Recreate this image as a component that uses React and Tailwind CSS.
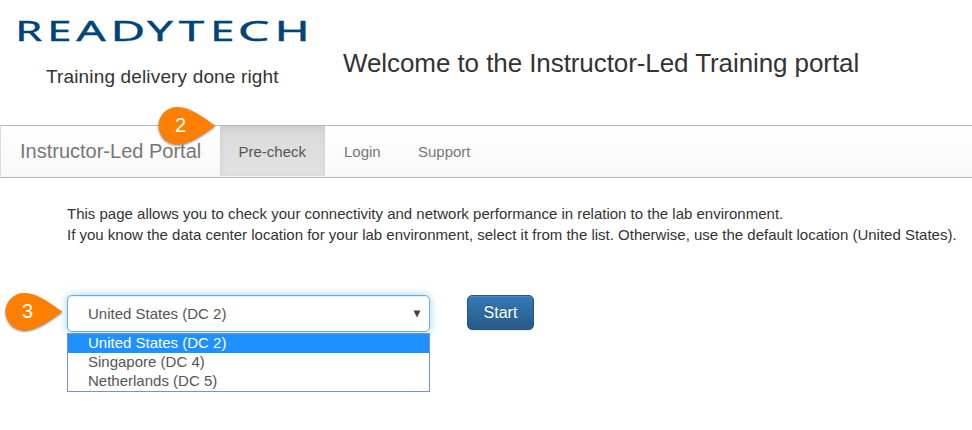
const letters = [
  { char: "R", transform: "translate(15.2 40.8) scale(1.55 1)" },
  { char: "E", transform: "translate(47.2 40.8) scale(1.55 1)" },
  { char: "A", transform: "translate(76.3 40.8) scale(1.65 1)" },
  { char: "D", transform: "translate(110.5 40.8) scale(1.7 1)" },
  { char: "Y", transform: "translate(147 40.8) scale(1.64 1)" },
  { char: "T", transform: "translate(178.8 40.8) scale(1.64 1)" },
  { char: "E", transform: "translate(210.2 40.8) scale(1.55 1)" },
  { char: "C", transform: "translate(237.8 40.8) scale(1.8 1)" },
  { char: "H", transform: "translate(274.5 40.8) scale(1.7 1)" },
];

function Logo() {
  return (
    <svg width="310" height="50" viewBox="0 0 310 50" className="block" role="img" aria-label="READYTECH">
      {letters.map(({ char, transform }, i) => (
        <text key={i} transform={transform} fontSize="28" fontFamily="'Noto Sans', sans-serif" fill="#004478" stroke="#004478" strokeWidth="0.4">
          {char}
        </text>
      ))}
    </svg>
  );
}

function Marker({ label, className }) {
  return (
    <div className={`absolute h-[38px] w-[58px] ${className}`}>
      <svg width="58" height="38" viewBox="0 0 58 38" className="absolute inset-0 overflow-visible drop-shadow-[0_1px_1px_rgba(0,0,0,0.5)]">
        <path d="M57.3 18.7C46 11 33 0 19.2 0A18.7 18.7 0 0 0 19.2 37.4C33 37.4 46 26.4 57.3 18.7Z" fill="#ff8000" />
      </svg>
      <span className="absolute left-[17px] top-[6px] text-[20px] leading-6 text-white">{label}</span>
    </div>
  );
}

export default function App() {
  return (
    <div className="h-[430px] w-[972px] overflow-hidden bg-white font-['Liberation_Sans',Arial,sans-serif] text-[15px] text-[#333]">
      <header className="flex h-[125px]">
        <div className="w-[343px] shrink-0">
          <Logo />
          <p className="pl-[46px] pt-[14px] text-[19px] leading-[26px] tracking-[0.15px] whitespace-nowrap">Training delivery done right</p>
        </div>
        <h1 className="pt-[45px] text-[26px] leading-9 tracking-[-0.08px] whitespace-nowrap">Welcome to the Instructor-Led Training portal</h1>
      </header>

      <nav className="relative flex h-[53px] border-y border-l border-y-[#b5b9b6] border-l-[#ddd] bg-linear-to-b from-white to-[#f8f8f8] text-[#777]">
        <span className="w-[219px] pl-[19px] text-[20px] leading-[51px] whitespace-nowrap">Instructor-Led Portal</span>
        <a className="h-[50px] w-[105px] bg-linear-to-b from-[#dbdbdb] to-[#e2e2e2] pl-[18.5px] leading-[51px] text-[#555] shadow-[inset_0_3px_9px_rgba(0,0,0,0.075)]">Pre-check</a>
        <a className="w-[74px] pl-[19px] leading-[51px]">Login</a>
        <a className="pl-[19px] leading-[51px]">Support</a>
        <Marker label="2" className="left-[157px] top-[-19px]" />
      </nav>

      <main className="pl-[67px] pt-[25px]">
        <p className="leading-[21px] whitespace-nowrap">
          This page allows you to check your connectivity and network performance in relation to the lab environment.<br />
          If you know the data center location for your lab environment, select it from the list. Otherwise, use the default location (United States).
        </p>
        <div className="mt-[50px] flex items-start gap-[37px]">
          <div className="relative w-[363px] text-[#555]">
            <div className="flex h-[37px] items-center justify-between rounded-[5px] border border-[#66afe9] bg-white pl-5 pr-2 shadow-[inset_0_1px_1px_rgba(0,0,0,0.075),0_0_8px_rgba(102,175,233,0.6)]">
              <span className="pt-0.5">United States (DC 2)</span>
              <svg width="8" height="8" viewBox="0 0 8 8"><path d="M.5 .5H7.5L4 7.5Z" fill="#444" /></svg>
            </div>
            <div className="relative mt-px h-[59px] border border-[#7891cb] bg-white leading-[19px]">
              <div className="h-[19px] bg-[#1e90ff] pl-5 leading-[17px] text-white">United States (DC 2)</div>
              <div className="h-[19px] pl-5 leading-[17px]">Singapore (DC 4)</div>
              <div className="h-[19px] pl-5 leading-[17px]">Netherlands (DC 5)</div>
            </div>
            <Marker label="3" className="left-[-62px] top-[-2px]" />
          </div>
          <button className="h-[35px] w-[67px] rounded-[5px] border border-[#245580] bg-linear-to-b from-[#337ab7] to-[#265a88] text-[16px] text-white shadow-[inset_0_1px_0_rgba(255,255,255,0.15),0_1px_1px_rgba(0,0,0,0.075)] text-shadow-[0_-1px_0_rgba(0,0,0,0.2)]">Start</button>
        </div>
      </main>
    </div>
  );
}
